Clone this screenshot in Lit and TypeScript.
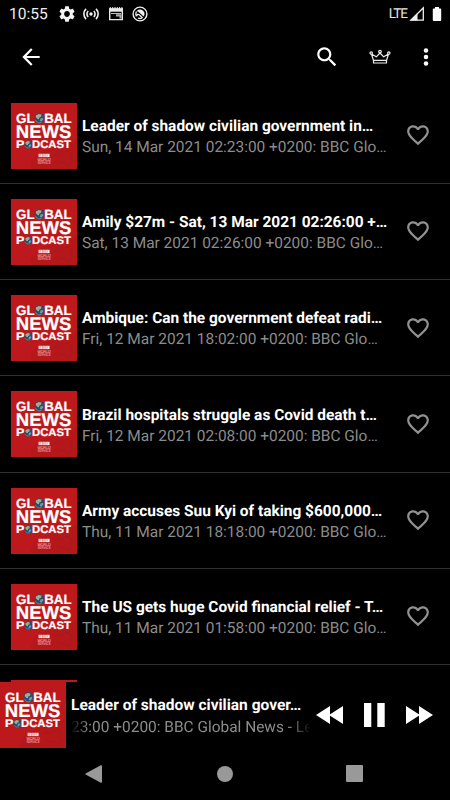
import { LitElement, html, svg, css, nothing } from "lit";
import { customElement, property } from "lit/decorators.js";

interface Episode {
  title: string;
  meta: string;
}

const EPISODES: Episode[] = [
  { title: "Leader of shadow civilian government in…", meta: "Sun, 14 Mar 2021 02:23:00 +0200: BBC Glo…" },
  { title: "Amily $27m - Sat, 13 Mar 2021 02:26:00 +…", meta: "Sat, 13 Mar 2021 02:26:00 +0200: BBC Glo…" },
  { title: "Ambique: Can the government defeat radi…", meta: "Fri, 12 Mar 2021 18:02:00 +0200: BBC Glo…" },
  { title: "Brazil hospitals struggle as Covid death t…", meta: "Fri, 12 Mar 2021 02:08:00 +0200: BBC Glo…" },
  { title: "Army accuses Suu Kyi of taking $600,000…", meta: "Thu, 11 Mar 2021 18:18:00 +0200: BBC Glo…" },
  { title: "The US gets huge Covid financial relief - T…", meta: "Thu, 11 Mar 2021 01:58:00 +0200: BBC Glo…" },
];

@customElement("podcast-cover")
export class PodcastCover extends LitElement {
  static styles = css`
    :host { display: block; width: 66px; height: 66px; flex: none; }
    svg { display: block; }
    text { font-family: "Liberation Sans", Arial, sans-serif; font-weight: 700; fill: #fff; stroke: #fff; stroke-width: .2px; text-rendering: geometricPrecision; }
    .small { font-weight: 400; fill: #ffdcdc; stroke: none; }
  `;
  private globe(x: number, y: number, r: number) {
    return svg`<g transform="translate(${x} ${y}) scale(${r / 5})">
      <circle r="5" fill="#1d5272"/>
      <path d="M-3.6 -2.8 L-1 -4.4 L2 -3.7 L1.6 -1.5 L-.2 -.6 L-.6 1 L-2 .8 L-3.8 -1Z" fill="#a9a88e"/>
      <path d="M1 .4 L3.5 -.4 L3.8 1.6 L1.5 3.8 L.4 2.2Z" fill="#6f9aa5"/>
      <path d="M-4 2 A4.6 4.6 0 0 0 2 4.2" stroke="#5fa0b8" stroke-width=".8" fill="none"/>
    </g>`;
  }
  render() {
    return html`<svg width="66" height="66" viewBox="0 0 66 66">
      <rect width="66" height="66" fill="#bd191c"/>
      <path d="M20 66 Q23 51 37 47 L66 37 V66Z" fill="#b01619" opacity=".55"/>
      <g fill="none" stroke="#8f1c1c" stroke-width=".6" opacity=".75">
        <path d="M20 63 Q22 54 30 50 M43 52 l4 -2 3 2 4 -4 3 1 3 -3 M46 57 l3 3 5 -1 2 3 5 -2 M58 49 l3 4 -2 3 4 3"/>
      </g>
      <text x="5" y="20" font-size="13.4" textLength="18.6" lengthAdjust="spacingAndGlyphs">GL</text>
      ${this.globe(28.5, 15.2, 4.9)}
      <text x="33.2" y="20" font-size="13.4" textLength="27.4" lengthAdjust="spacingAndGlyphs">BAL</text>
      <text x="4.8" y="35" font-size="18.4" textLength="55.6" lengthAdjust="spacingAndGlyphs">NEWS</text>
      <text x="5" y="45.4" font-size="11" textLength="8.4" lengthAdjust="spacingAndGlyphs">P</text>
      ${this.globe(17.3, 41.5, 3.9)}
      <text x="21" y="45.4" font-size="11" textLength="39" lengthAdjust="spacingAndGlyphs">DCAST</text>
      <g fill="#fff"><rect x="27.6" y="50.8" width="3.3" height="3.3"/><rect x="31.4" y="50.8" width="3.3" height="3.3"/><rect x="35.2" y="50.8" width="3.3" height="3.3"/></g>
      <g fill="none" stroke="#d25a5a" stroke-width=".5"><path d="M28.6 51.5h1.3v1.8h-1.3zM32.4 51.5h1.3v1.8h-1.3zM37.5 51.6h-1.1v1.6h1.1"/></g>
      <text class="small" x="26.4" y="58" font-size="4" textLength="13.4" lengthAdjust="spacingAndGlyphs">WORLD</text>
      <text class="small" x="26.4" y="61.3" font-size="4" textLength="13.4" lengthAdjust="spacingAndGlyphs">SERVICE</text>
    </svg>`;
  }
}

@customElement("episode-row")
export class EpisodeRow extends LitElement {
  @property({ attribute: false }) episode?: Episode;
  static styles = css`
    :host { display: flex; box-sizing: border-box; height: 96.3px; padding: 15px 19px 0 11px; border-bottom: 1px solid #303030; flex: none; }
    .blank { width: 66px; height: 66px; background: #bd191c; }
    .text { flex: 1; min-width: 0; padding: 13.3px 0 0 5px; white-space: nowrap; text-rendering: geometricPrecision; }
    .title { font-size: 15.45px; line-height: 21px; font-weight: 700; color: #fff; }
    .meta { font-size: 15.45px; line-height: 21px; color: #8c8c8c; }
    .heart { display: block; flex: none; margin-top: 19.4px; }
  `;
  render() {
    if (!this.episode) return html`<div class="blank"></div>${nothing}`;
    return html`
      <podcast-cover></podcast-cover>
      <div class="text">
        <div class="title">${this.episode.title}</div>
        <div class="meta">${this.episode.meta}</div>
      </div>
      <svg class="heart" width="26" height="26" viewBox="0 0 24 24" fill="#919191"><path d="M16.5 3c-1.74 0-3.41.81-4.5 2.09C10.91 3.81 9.24 3 7.5 3 4.42 3 2 5.42 2 8.5c0 3.78 3.4 6.86 8.55 11.54L12 21.35l1.45-1.32C18.6 15.36 22 12.28 22 8.5 22 5.42 19.58 3 16.5 3zm-4.4 15.55l-.1.1-.1-.1C7.14 14.24 4 11.39 4 8.5 4 6.5 5.5 5 7.5 5c1.54 0 3.04.99 3.57 2.36h1.87C13.46 5.99 14.96 5 16.5 5c2 0 3.5 1.5 3.5 3.5 0 2.89-3.14 5.74-7.9 10.05z"/></svg>
    `;
  }
}

@customElement("app-root")
export class AppRoot extends LitElement {
  static styles = css`
    :host { display: flex; flex-direction: column; width: 450px; height: 800px; overflow: hidden; background: #000; color: #fff; font-family: Roboto, sans-serif; text-rendering: geometricPrecision; }
    svg { display: block; flex: none; }
    .status { display: flex; align-items: center; height: 27px; padding: 0 8px 0 9px; flex: none; }
    .clock { font-size: 15.6px; line-height: 27px; width: 50px; padding-top: 1px; color: #ececec; }
    .notes { display: flex; gap: 8.3px; flex: 1; }
    .lte { font-size: 13.6px; line-height: 25px; letter-spacing: -1px; padding-top: 1px; margin-right: 2px; color: #e6e6e6; }
    .battery { margin-left: 7px; }
    .bar { display: flex; align-items: center; height: 60.6px; padding: 0 11px 0 18px; flex: none; }
    .spacer { flex: 1; }
    .crown { margin: 0 22px 0 29px; }
    .list { height: 594.4px; overflow: hidden; flex: none; display: flex; flex-direction: column; }
    .player { display: flex; height: 66px; flex: none; }
    .now { width: 240px; margin-left: 5px; padding-top: 13px; overflow: hidden; white-space: nowrap; }
    .now-title { font-size: 15.5px; line-height: 21px; font-weight: 700; }
    .ticker { display: flex; overflow: hidden; width: 238px; font-size: 15.45px; line-height: 22px; color: #8c8c8c; -webkit-mask-image: linear-gradient(90deg, transparent 0, #000 18px, #000 218px, transparent 240px); mask-image: linear-gradient(90deg, transparent 0, #000 18px, #000 218px, transparent 240px); }
    .controls { display: flex; align-items: center; padding-left: 5px; }
    .pause { margin: 0 21px; }
    .nav { display: flex; flex: 1; align-items: center; justify-content: space-between; padding: 0 87px 0 85px; }
    .home { margin-left: 1px; }
  `;

  render() {
    return html`
      <div class="status">
        <span class="clock">10:55</span>
        <div class="notes">
          <svg width="16" height="16" viewBox="2 2 20 20" fill="#f2f2f2"><path d="M19.14 12.94c.04-.3.06-.61.06-.94 0-.32-.02-.64-.07-.94l2.03-1.58c.18-.14.23-.41.12-.61l-1.92-3.32c-.12-.22-.37-.29-.59-.22l-2.39.96c-.5-.38-1.03-.7-1.62-.94l-.36-2.54c-.04-.24-.24-.41-.48-.41h-3.84c-.24 0-.43.17-.47.41l-.36 2.54c-.59.24-1.13.57-1.62.94l-2.39-.96c-.22-.08-.47 0-.59.22L2.74 8.87c-.12.21-.08.47.12.61l2.03 1.58c-.05.3-.09.63-.09.94s.02.64.07.94l-2.03 1.58c-.18.14-.23.41-.12.61l1.92 3.32c.12.22.37.29.59.22l2.39-.96c.5.38 1.03.7 1.62.94l.36 2.54c.05.24.24.41.48.41h3.84c.24 0 .44-.17.47-.41l.36-2.54c.59-.24 1.13-.56 1.62-.94l2.39.96c.22.08.47 0 .59-.22l1.92-3.32c.12-.22.07-.47-.12-.61l-2.01-1.58zM12 15.6c-1.98 0-3.6-1.62-3.6-3.6s1.62-3.6 3.6-3.6 3.6 1.62 3.6 3.6-1.62 3.6-3.6 3.6z"/></svg>
          <svg width="16" height="16" viewBox="0 0 16 16" fill="none" stroke="#f2f2f2" stroke-width="1.6"><circle cx="8" cy="8" r="1.7" fill="#f2f2f2" stroke="none"/><path d="M5.2 5a4.2 4.2 0 0 0 0 6M10.8 5a4.2 4.2 0 0 1 0 6M3 2.9a7.2 7.2 0 0 0 0 10.2M13 2.9a7.2 7.2 0 0 1 0 10.2"/></svg>
          <svg width="16" height="16" viewBox="0 0 16 16"><path d="M1.7 3h12.6v10.6H1.7z" fill="none" stroke="#e8e8e8" stroke-width="1.4"/><path d="M1 2.5h14v3.2H1z" fill="#e8e8e8"/><path d="M2.3 1v2M4.7 1v2M7 1v2M9.3 1v2M11.6 1v2M13.9 1v2" stroke="#e8e8e8"/><path d="M3 7.5h10" stroke="#bbb"/><path d="M8 8.2h5.5v4.4H11.5V10.4H8z" fill="#aaa"/></svg>
          <svg width="16" height="16" viewBox="0 0 16 16" fill="none" stroke="#eee"><circle cx="8" cy="8" r="6.9" stroke-width="1.4"/><path d="M4.6 5.2A4.4 4.4 0 0 1 11.6 10.6L6.4 5.8Z" fill="#eee" stroke="none"/><path d="M4.4 5.4Q3.2 8 4.3 10.2M4.4 10.2Q5.6 7.4 7.2 8.8L10.6 12M6 12Q8 13 10 12" stroke-width="1.3"/></svg>
        </div>
        <span class="lte">LTE</span>
        <svg width="16" height="16" viewBox="0 0 16 16"><path d="M1.8 14.2L14.3 1.7V14.2Z" fill="none" stroke="#eee" stroke-width="1.3"/><path d="M1 14.6L8.5 7V14.6Z" fill="#eee"/></svg>
        <svg class="battery" width="10" height="16" viewBox="0 0 10 16" fill="#fff"><path d="M3 1h4v1.4h1.2q1 0 1 1V14q0 1-1 1H1.8q-1 0-1-1V3.4q0-1 1-1H3z"/></svg>
      </div>

      <div class="bar">
        <svg width="26" height="26" viewBox="0 0 24 24" fill="#fff"><path d="M20 11H7.83l5.59-5.59L12 4l-8 8 8 8 1.41-1.41L7.83 13H20v-2z"/></svg>
        <div class="spacer"></div>
        <svg width="26" height="26" viewBox="0 0 24 24" fill="#fff"><path d="M15.5 14h-.79l-.28-.27C15.41 12.59 16 11.11 16 9.5 16 5.91 13.09 3 9.5 3S3 5.91 3 9.5 5.91 16 9.5 16c1.61 0 3.09-.59 4.23-1.57l.27.28v.79l5 4.99L20.49 19l-4.99-5zm-6 0C7.01 14 5 11.99 5 9.5S7.01 5 9.5 5 14 7.01 14 9.5 11.99 14 9.5 14z"/></svg>
        <svg class="crown" width="22" height="16" viewBox="0 0 22 16" fill="none" stroke="#eee" stroke-width="1.2" stroke-linejoin="round"><path d="M4.4 11.3L2.5 5.1L7.3 7.8L11 4L14.7 7.8L19.5 5.1L17.6 11.3ZM4.5 11.3V14h13V11.3"/><g fill="#000"><circle cx="2.2" cy="4.1" r="1.2"/><circle cx="11" cy="2.6" r="1.3"/><circle cx="19.8" cy="4.1" r="1.2"/></g></svg>
        <svg width="26" height="26" viewBox="0 0 26 26" fill="#fff"><circle cx="13" cy="6.5" r="2.25"/><circle cx="13" cy="13" r="2.25"/><circle cx="13" cy="19.5" r="2.25"/></svg>
      </div>

      <div class="list">
        ${EPISODES.map((e) => html`<episode-row .episode=${e}></episode-row>`)}
        <episode-row></episode-row>
      </div>

      <div class="player">
        <podcast-cover></podcast-cover>
        <div class="now">
          <div class="now-title">Leader of shadow civilian gover…</div>
          <div class="ticker">23:00 +0200: BBC Global News - Le</div>
        </div>
        <div class="controls">
          <svg width="27" height="18" viewBox="0 0 27 18" fill="#fff"><path d="M0 9L14 0V18ZM13 9L27 0V18Z"/></svg>
          <svg class="pause" width="21" height="24" viewBox="0 0 21 24" fill="#fff"><path d="M0 0h7.3v24H0zM13.3 0h7.4v24h-7.4z"/></svg>
          <svg width="27" height="18" viewBox="0 0 27 18" fill="#fff"><path d="M0 0L14 9L0 18ZM13 0L27 9L13 18Z"/></svg>
        </div>
      </div>

      <div class="nav">
        <svg width="17" height="18" viewBox="0 0 17 18" fill="#999"><path d="M.6 8.4Q0 9 .6 9.6L15.8 17.8Q17 18 17 17V1Q17 0 15.8.2Z"/></svg>
        <svg class="home" width="16" height="16" viewBox="0 0 16 16"><circle cx="8" cy="8" r="8" fill="#999"/></svg>
        <svg width="17" height="17" viewBox="0 0 17 17"><rect width="17" height="17" rx="1" fill="#999"/></svg>
      </div>
    `;
  }
}
